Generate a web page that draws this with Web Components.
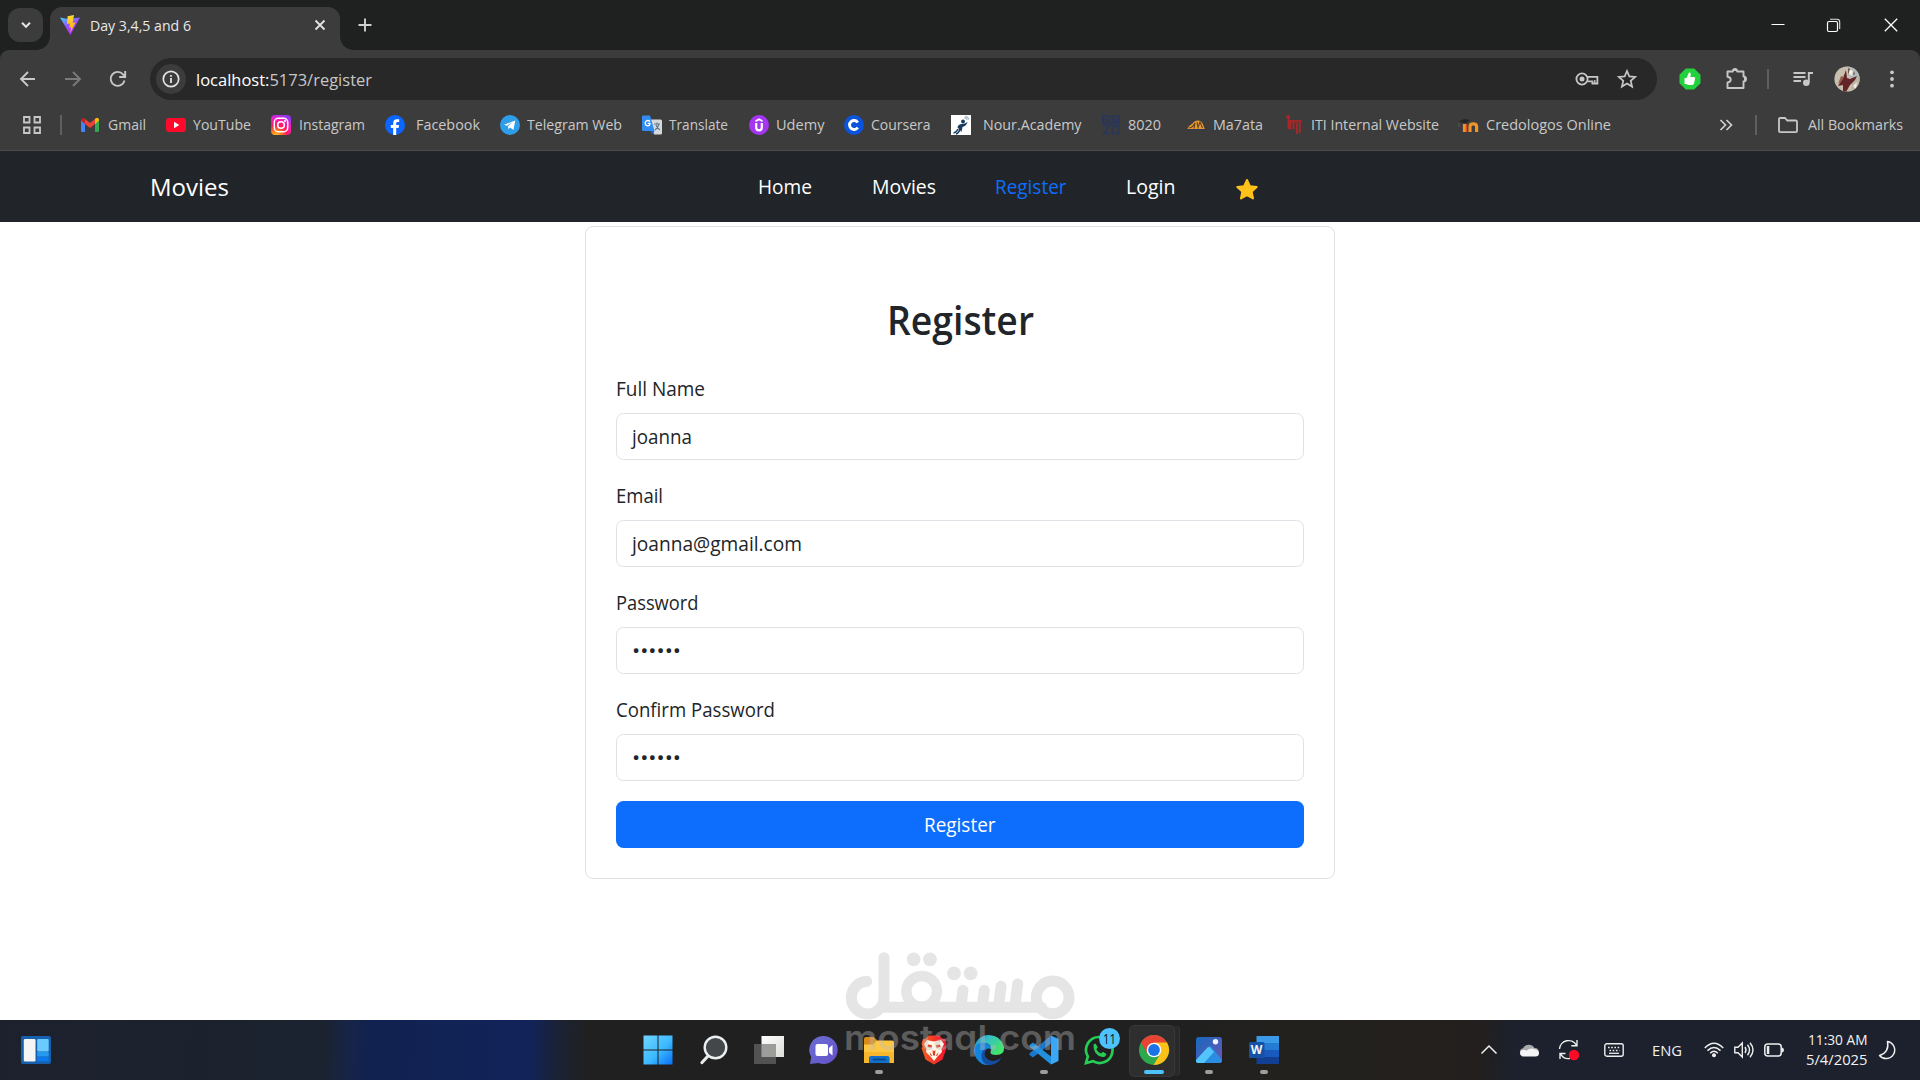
<!DOCTYPE html>
<html lang="en">
<head>
<meta charset="utf-8">
<title>Day 3,4,5 and 6</title>
<style>
html,body{margin:0;height:100%;overflow:hidden;background:#fff}
body{font-family:"Open Sans","Noto Sans",sans-serif}
</style>
</head>
<body>
<desktop-screen></desktop-screen>
<script>
const ICONS = {
  chevdown: [12,12,'<path d="M2 3.8l4 4 4-4" fill="none" stroke="#e3e3e3" stroke-width="2"/>'],
  vite: [20,20,'<defs><linearGradient id="a" x1="0" y1="0" x2=".6" y2="1"><stop offset="0" stop-color="#41d1ff"/><stop offset=".55" stop-color="#9a4bff"/><stop offset="1" stop-color="#bd34fe"/></linearGradient><linearGradient id="b" x1="0" y1="0" x2="0" y2="1"><stop offset="0" stop-color="#ffdd35"/><stop offset="1" stop-color="#ffa800"/></linearGradient></defs><path d="M0 2.5l8 1.4L20 2.5 10.300 20z" fill="url(#a)"/><path d="M14 0L7.600 1.300 7 9l3-.6-1 4.300 2-.6-.4 5.200 5-10-3 .6z" fill="url(#b)"/>'],
  close: [12,12,'<path d="M1.500 1.500l9 9m0-9l-9 9" stroke="#e3e3e3" stroke-width="1.800"/>'],
  plus: [14,14,'<path d="M7 .5v13M.5 7h13" stroke="#d0d0d0" stroke-width="1.900"/>'],
  wmin: [14,14,'<path d="M.5 6.500h13" stroke="#fff" stroke-width="1"/>'],
  wmax: [14,14,'<rect x=".5" y="3.500" width="10" height="10" rx="1.500" fill="none" stroke="#fff" stroke-width="1.200"/><path d="M3 1.200h7q2.700 0 2.700 2.700v7" fill="none" stroke="#ddd" stroke-width="1.100"/>'],
  wclose: [14,14,'<path d="M.8.8l12.400 12.400m0-12.400L.8 13.200" stroke="#fff" stroke-width="1.300"/>'],
  back: [20,20,'<path d="M17 10H3.500M10 3l-7 7 7 7" fill="none" stroke="#c7c7c7" stroke-width="1.900"/>'],
  fwd: [20,20,'<path d="M2 10h14.500M10 3l7 7-7 7" fill="none" stroke="#7a7a7a" stroke-width="1.900"/>'],
  reload: [20,20,'<path d="M16.500 11.500A7 7 0 1 1 15 5.300L17 7.600M17.200 2v6h-6" fill="none" stroke="#c7c7c7" stroke-width="1.900"/>'],
  info: [18,18,'<circle cx="9" cy="9" r="7.700" fill="none" stroke="#e3e3e3" stroke-width="1.700"/><path d="M9 8v5M9 5v1.800" stroke="#e3e3e3" stroke-width="1.800"/>'],
  key: [24,14,'<circle cx="7" cy="7" r="5.600" fill="none" stroke="#c7c7c7" stroke-width="1.800"/><circle cx="7" cy="7" r="2.500" fill="#c7c7c7"/><path d="M12 4.800h10.400v6.700h-5V9.300h-5" fill="none" stroke="#c7c7c7" stroke-width="1.800"/><path d="M19.800 8v3" stroke="#c7c7c7" stroke-width="1.400"/>'],
  star: [20,20,'<path d="M10 2l2.300 5.400 5.900.5-4.500 3.900 1.400 5.800-5.100-3.100-5.100 3.100 1.400-5.800L1.800 7.900l5.900-.5z" fill="none" stroke="#c7c7c7" stroke-width="1.700"/>'],
  thumb: [22,22,'<path d="M6.800.5h8.400l6.300 6.200v8.600l-6.300 6.200H6.800L.5 15.300V6.700z" fill="#22d13c"/><path d="M5.500 10h2L10 4.500Q12 4 11.800 6.500L11.300 9h4Q16.500 9.500 16 11l-1 4.600q-.4 1.400-2 1.400H9l-1.500-1h-2z" fill="#fff"/>'],
  puzzle: [24,24,'<path d="M3.500 4.500H8.800q.2-2.500 2.200-2.500t2.200 2.500h6.300v5q2.500.2 2.500 2.500t-2.500 2.500v6.500h-16V15.500q3.200-.3 3.200-2.800T3.500 9.800z" fill="none" stroke="#c7c7c7" stroke-width="1.900" stroke-linejoin="round"/><path d="M9 4q.2-2.500 2-2.500T13 4zM20 10q2.600.2 2.600 2T20 14z" fill="#c7c7c7"/>'],
  media: [24,20,'<path d="M2.500 4h12M2.500 8h12M2.500 12h7.500" stroke="#c7c7c7" stroke-width="1.800"/><circle cx="15.300" cy="13.700" r="3.300" fill="#c7c7c7"/><path d="M17.800 13.500V4H22" fill="none" stroke="#c7c7c7" stroke-width="1.900"/>'],
  avatar: [26,26,'<clipPath id="c"><circle cx="13" cy="13" r="12.600"/></clipPath><g clip-path="url(#c)"><path fill="#c9bfae" d="M0 0h26v26H0z"/><path d="M13 0h13v12l-9 3z" fill="#b4b9ba"/><path d="M18 14l8-3v15h-9z" fill="#bdb6a6"/><path d="M12 4l1 8 3 1 7-3-2 4-5 5-4 7H9l0-7-5 1 5-8z" fill="#642528"/><path d="M15 3l4 2-1 5-3-2zM19 20l4-4-1 7z" fill="#f1ede6"/><path d="M14 2l2 1-2 6zM20 5l1 3-2 1z" fill="#6d5550"/><path d="M7 10l3 1-3 5-3 2z" fill="#95604f"/></g>'],
  dots: [6,20,'<g fill="#c7c7c7"><circle cx="3" cy="3.300" r="1.900"/><circle cx="3" cy="10" r="1.900"/><circle cx="3" cy="16.700" r="1.900"/></g>'],
  apps: [20,20,'<g fill="none" stroke="#c7c7c7" stroke-width="1.800"><path d="M2 2h5.500v5.500H2zM12.500 2H18v5.500h-5.500zM2 12.500h5.500V18H2zM12.500 12.500H18V18h-5.500z"/></g>'],
  gmail: [20,20,'<path d="M1 5v10.500q0 1.500 1.500 1.500H5V8z" fill="#4285f4"/><path d="M19 5v10.500q0 1.500-1.500 1.500H15V8z" fill="#34a853"/><path d="M15 8l4-3q0-2-2-2.200L15 4z" fill="#fbbc04"/><path d="M5 4l5 4 5-4v5l-5 4-5-4z" fill="#ea4335"/><path d="M5 9V4L3.500 3Q1 2.800 1 5.500z" fill="#c5221f"/><path d="M15 9V4l1.500-1Q19 2.800 19 5.500z" fill="#fbbc04"/>'],
  youtube: [20,20,'<rect y="3" width="20" height="14" rx="3.300" fill="#ff0a2a"/><path d="M8 6.800v6.400l5.300-3.200z" fill="#fff"/>'],
  instagram: [20,20,'<defs><radialGradient id="d" cx=".25" cy="1.050" r="1.100"><stop offset="0" stop-color="#ffd02a"/><stop offset=".25" stop-color="#ff7a1a"/><stop offset=".5" stop-color="#ff1a60"/><stop offset=".8" stop-color="#f81cc4"/><stop offset="1" stop-color="#9236f0"/></radialGradient></defs><rect width="20" height="20" rx="4" fill="url(#d)"/><rect x="3.300" y="3.300" width="13.400" height="13.400" rx="4" fill="none" stroke="#fff" stroke-width="1.500"/><circle cx="10" cy="10" r="3.300" fill="none" stroke="#fff" stroke-width="1.600"/><circle cx="14" cy="6" r="1" fill="#fff"/>'],
  facebook: [20,20,'<circle cx="10" cy="10" r="10" fill="#0a66ff"/><path d="M8.200 20v-7H5.800v-3h2.400V8q0-3.800 3.600-3.800h2.400V7h-1.600Q11.200 7 11.200 8.300V10h2.900l-.5 3h-2.400v7z" fill="#fff"/>'],
  telegram: [20,20,'<circle cx="10" cy="10" r="10" fill="#2f9ee8"/><path d="M4 9.800L15.300 5.400 13.400 15l-3.300-2.400-1.700 1.600-.4-3 4.400-4-5.500 3.500z" fill="#fff"/>'],
  translate: [20,20,'<path d="M8 4.500h10.500q1.500 0 1.500 1.500v12q0 1.500-1.500 1.500H12z" fill="#d7dadd"/><path d="M12 9h6m-3-1.500V9m2 0q-1 4-4 6m1-5q1 3 4 5" fill="none" stroke="#62778c" stroke-width="1.100"/><path d="M0 1.500Q0 .5 1 .5h7L12.500 16H1.500Q0 16 0 14.500z" fill="#2f8df4"/><path d="M8.300 16h4.200l-2.800 3.500z" fill="#1b62c4"/><path d="M8 6.500Q6.500 5 4.600 5.800 3 6.800 3.200 8.700q.5 2.200 2.500 2.200Q8 10.700 8 8.400H5.700" fill="none" stroke="#fff" stroke-width="1.300"/>'],
  udemy: [20,20,'<circle cx="10" cy="10" r="10" fill="#a435f0"/><path d="M6.500 6.300L10 4.300l3.500 2" fill="none" stroke="#fff" stroke-width="1.800"/><path d="M7.200 8v4.500q0 2.800 2.800 2.800t2.800-2.800V8" fill="none" stroke="#fff" stroke-width="2.200"/>'],
  coursera: [20,20,'<circle cx="10" cy="10" r="10" fill="#0a53dc"/><path d="M13.800 7.500A4.500 4.500 0 1 0 13.800 12.500" fill="none" stroke="#fff" stroke-width="2.900"/>'],
  nour: [20,20,'<path d="M0 0h20v20H0z" fill="#fff"/><circle cx="12" cy="6.500" r="1.900" fill="#173b60"/><path d="M16.500 7q-1 4-5 5l-1 5q-2-3-4-4.500Q7 9 11 9q3 0 5.500-2z" fill="#173b60"/><path d="M9 14q-1 4-4 5m2-5q-2 4-4.500 4" fill="none" stroke="#173b60" stroke-width="1.400"/><path d="M14 1.500q3 0 4 3m-5-1.500q3-.5 3 2" fill="none" stroke="#a7b5c3" stroke-width="1.200"/>'],
  n8020: [20,20,'<g fill="none" stroke="#2c3657" stroke-width="1.900"><path d="M2 1h6v7H2zM2 3l6 4M11 1.500h7v7h-7zM12 3l5 5M2 10.500h6.500l-6 8H9M11.500 11h6v7.500h-6z"/></g><path d="M11 4h7v4h-7z" fill="#2c3657"/>'],
  ma7ata: [20,20,'<path d="M1 14.500Q2.500 10.500 6.500 8.500 8.500 5.500 12 5.500q3.500 0 5 4l2 5z" fill="#e9982f"/><path d="M3 13q4-.5 6-5l-1 5.500M11 7l1 5.500L14 7l2.500 6" fill="none" stroke="#5c4322" stroke-width="1.100"/><path d="M1 14.500h18" stroke="#2b3a55"/>'],
  iti: [20,20,'<path d="M1 2h4M3.500 0v14M5.500 5v9.500M8.500 6.500V14M12 8v11M14.800 6v12" fill="none" stroke="#a92628" stroke-width="1.900"/><path d="M5 6.200h11.500" stroke="#a92628" stroke-width="2.200"/>'],
  moodle: [22,20,'<path d="M0 7l6-3 6 1-4 3z" fill="#252525"/><path d="M1 7v5" stroke="#555"/><path d="M6.500 17V9M12 17v-5.500q0-2.700 3.300-2.700t3.300 2.700V17" fill="none" stroke="#f09329" stroke-width="3.200"/><path d="M8.500 17V9" stroke="#d64b2c" stroke-width="1.500"/>'],
  more: [14,12,'<path d="M1.500 1l5 5-5 5M7.500 1l5 5-5 5" fill="none" stroke="#d0d0d0" stroke-width="1.700"/>'],
  folder: [22,18,'<path d="M2 15V3.300Q2 2 3.300 2H8l2.300 2.500h8.400Q20 4.500 20 5.800V15q0 1.200-1.300 1.200H3.300Q2 16.200 2 15z" fill="none" stroke="#c7c7c7" stroke-width="1.800"/>'],
  favstar: [24,24,'<path d="M12 2l2.900 6.200 6.800.8-5 4.600 1.300 6.800L12 17.100 6 20.400l1.300-6.800-5-4.600 6.800-.8z" fill="#ffc11a" stroke="#ffc11a" stroke-width="2" stroke-linejoin="round"/>'],
  widgets: [30,28,'<rect width="30" height="28" rx="2" fill="#1760ad"/><rect x="2.800" y="3" width="11.700" height="22.500" rx="1.200" fill="#f5f5f5"/><rect x="16.200" y="3" width="11.500" height="12.500" rx="1" fill="#6acbff"/><path d="M16.200 16h11.500v4.500H16.200z" fill="#2699f1"/><path d="M16.200 21h11.500v4.500H16.200z" fill="#0d78ec"/>'],
  start: [30,30,'<defs><linearGradient id="e" x1="0" y1="0" x2="1" y2="1"><stop offset="0" stop-color="#70d5ff"/><stop offset=".55" stop-color="#3cbaff"/><stop offset="1" stop-color="#0a6ff5"/></linearGradient></defs><path d="M.5.500h14v14h-14zM15.500.500h14v14h-14zM.500 15.500h14v14h-14zM15.500 15.500h14v14h-14z" transform="translate(-1)" fill="url(#e)"/>'],
  search: [30,30,'<path d="M9.500 20.500l-6.500 7" stroke="#e8eaeb" stroke-width="3.200" stroke-linecap="round"/><circle cx="16.500" cy="12.500" r="10.800" fill="#44474a" stroke="#eceff0" stroke-width="2.400"/>'],
  taskview: [30,30,'<defs><linearGradient id="f" x1="0" y1="0" x2="1" y2="1"><stop offset="0" stop-color="#fff"/><stop offset="1" stop-color="#dcdcd8"/></linearGradient></defs><path d="M7.500 1h22.500v21H7.500z" fill="url(#f)"/><path d="M0 9h22v20H0z" fill="#555" opacity=".95"/><path d="M7.500 9H22v13H7.500z" fill="#9c9c9a"/>'],
  chat: [30,30,'<defs><linearGradient id="g" x1="0" y1="0" x2="1" y2="1"><stop offset="0" stop-color="#6c6fd2"/><stop offset="1" stop-color="#6350c9"/></linearGradient></defs><path d="M15 1a14 14 0 1 1-5.500 27L1 29l1.200-7A14 14 0 0 1 15 1z" fill="url(#g)"/><rect x="6.500" y="9" width="12.500" height="12" rx="2" fill="#fff"/><path d="M20 13l3.500-3v10.500L20 17.500z" fill="#fff"/>'],
  explorer: [30,28,'<path d="M0 3Q0 1 2 1h7.500L13 4v6H0z" fill="#d98a18"/><path d="M0 8.500h9l3.500-4H28q2 0 2 2V27H0z" fill="#ffc640"/><path d="M0 16h30v11H0z" fill="#f8b62d"/><path d="M5 27v-5q0-2 2-2h16.500q2 0 2 2v5z" fill="#1270c8"/><path d="M9.500 23.500h11.500" stroke="#084a91" stroke-width="1.800" stroke-linecap="round"/>'],
  brave: [26,30,'<defs><linearGradient id="h"><stop offset="0" stop-color="#f26122"/><stop offset="1" stop-color="#f5102c"/></linearGradient></defs><path d="M7.500.5h11l3 3.300 2.500.3 1.500 4.300-1 3.600 1 1-4 11.500L13 29.500l-8.500-5L.5 13l1-1-1-3.600L2 4.100l2.500-.3z" fill="url(#h)"/><path d="M6 5l7 1.500L20 5l3 4-2.500 5 .5 3-4.500 4.500L13 26l-3.500-4.500L5 17l.5-3L3 9z" fill="#fff7e5"/><path d="M7 9.500l4 .8-.5 2.500L6.500 12zM19 9.500l-4 .8.5 2.500 4-.8zM11.500 15l1.500 1.300 1.500-1.300-.5 5-1 1-1-1zM8.500 17l3 4-2-.5zM17.500 17l-3 4 2-.5z" fill="#df3927"/>'],
  edge: [30,30,'<defs><linearGradient id="i" x1="0" y1="0" x2="1" y2=".5"><stop offset="0" stop-color="#1b83cf"/><stop offset=".45" stop-color="#35bfc7"/><stop offset="1" stop-color="#43e46a"/></linearGradient></defs><path d="M15 0Q27 .5 30 12q.8 8-8 8-6 0-5.500-3Q19 10 12 8 4 7 0 14 2 .5 15 0z" fill="url(#i)"/><path d="M0 14Q4 6 12 8q5 1.500 5.500 6.500Q12 11 10 19q1 7 8 10-8 3-13.500-3T0 14z" fill="#1485df"/><path d="M12 13.500q-3.500 7 1.500 10.500 6 4.500 14-1.500-4 7.500-12.500 7.500Q7 29 7.500 20q.5-5 4.500-6.500z" fill="#164c9f"/>'],
  vscode: [30,30,'<path d="M22 .500L29.500 4v22L22 29.500z" fill="#3ba7f5"/><path d="M22 .500v8L4 22.500.500 20v-1.700z" fill="#1d75c6"/><path d="M22 29.500v-8L4 7.500.500 10v1.700z" fill="#238fdf"/>'],
  whatsapp: [30,30,'<path d="M15.500 2a13 13 0 1 1-6.500 24.200L2 28l1.800-6.500A13 13 0 0 1 15.500 2z" fill="none" stroke="#25cc55" stroke-width="2.700"/><path d="M9.500 9.500l2-1 2.300 3.800-1.500 2q1.500 3 4.800 4.200l1.800-1.800 3.500 2.200q-.5 3-3.800 3.200Q9 20 9.500 9.500z" fill="#25cc55"/>'],
  chrome: [30,30,'<circle cx="15" cy="15" r="15" fill="#2ca84f"/><path d="M2 7.500A15 15 0 0 1 28 7.500L15 8.500 8.500 18.800z" fill="#e84335"/><path d="M28 7.500A15 15 0 0 1 14.500 30L21.500 18.500 15 7.500z" fill="#fbc116"/><circle cx="15" cy="15" r="7.300" fill="#fff"/><circle cx="15" cy="15" r="5.900" fill="#1a73e8"/>'],
  photos: [26,26,'<defs><linearGradient id="j" x1="0" y1="0" x2="1" y2="1"><stop offset="0" stop-color="#1668bd"/><stop offset="1" stop-color="#6c58b7"/></linearGradient></defs><rect width="26" height="26" rx="2.500" fill="url(#j)"/><path d="M0 24L13 9.500q1-1 2 0l11 13.500q0 3-3 3H2q-2 0-2-2z" fill="#2a8de2"/><path d="M0 23l11.500-12.500q1.300-1 2.500 0l4 4.500-10 11H2q-2 0-2-3z" fill="#52c6fb"/><circle cx="19.500" cy="4.800" r="2.700" fill="#f3f2ff"/>'],
  word: [30,28,'<path d="M7.500 0H30v7H7.500z" fill="#3a9ae8"/><path d="M7.500 7H30v7H7.500z" fill="#247bd4"/><path d="M7.500 14H30v7H7.500z" fill="#185abd"/><path d="M7.500 21H30v7H7.500z" fill="#123f91"/><rect x="0" y="6" width="15.500" height="16" rx="1.500" fill="#1552a7"/>'],
  tup: [18,12,'<path d="M1.500 9.500L9 2l7.500 7.500" fill="none" stroke="#eee" stroke-width="1.500"/>'],
  cloud: [20,14,'<path d="M4 13a4 4 0 0 1 0-7.800A6.500 6.500 0 0 1 15.500 5 4 4 0 0 1 16 13z" fill="#a8aaac"/><path d="M3.500 13.500a3.500 3.500 0 0 1 .5-6.800q2.500 0 3.500 1 4-3.500 8.200-1.500Q20 7 20 10.200q-.2 3.300-3.500 3.300z" fill="#f4f4f4"/>'],
  sync: [22,22,'<path d="M1.500 10A9 9 0 0 1 18.500 6.500M19 1v5.700h-5.700M12 19.500q-7 1-9.500-5M2 20v-5.500h5.500" fill="none" stroke="#eee" stroke-width="1.400"/><circle cx="16" cy="16" r="5.200" fill="#fb0b25"/>'],
  keyboard: [20,14,'<rect x=".8" y=".8" width="18.400" height="12.400" rx="2" fill="none" stroke="#eee" stroke-width="1.400"/><path d="M4 4.500h12.500M5.500 7.500h10" stroke="#eee" stroke-width="1.600" stroke-dasharray="1.600 1.600"/><path d="M5 10.300h10" stroke="#eee" stroke-width="1.300"/>'],
  wifi: [20,16,'<g fill="none" stroke="#eee" stroke-width="1.500"><path d="M.8 6Q10-3.500 19.200 6M3.500 8.600q6.500-6.300 13 0M6.200 11.200q3.800-3.800 7.600 0"/></g><circle cx="10" cy="13.200" r="2" fill="#eee"/>'],
  speaker: [20,18,'<g fill="none" stroke="#eee" stroke-width="1.400"><path d="M.8 6.200H4L8.300 2v14L4 11.800H.8zM11 6q2 3 0 6M13.500 3.800q4 5.200 0 10.400M16 1.800q6 7.200 0 14.400"/></g>'],
  battery: [20,14,'<rect x=".8" y="1" width="16.400" height="12" rx="3" fill="none" stroke="#eee" stroke-width="1.500"/><path d="M2.800 3h2.500v8H2.800z" fill="#eee"/><path d="M18 4.500q2 .5 2 2.500t-2 2.500z" fill="#eee"/>'],
  moon: [18,20,'<path d="M9.500 1.500A8.600 8.600 0 1 1 1.500 15.500Q11.500 12.500 9.500 1.500z" fill="none" stroke="#eee" stroke-width="1.500" stroke-linejoin="round"/>']
};

const def = (name, css, html, setup) => {
  const t = document.createElement('template');
  t.innerHTML = `<style>:host{display:block;box-sizing:border-box}*{box-sizing:border-box}${css}</style>${html}`;
  customElements.define(name, class extends HTMLElement {
    connectedCallback() {
      if (this.shadowRoot) return;
      this.attachShadow({mode:'open'}).appendChild(t.content.cloneNode(true));
      if (setup) setup(this, this.shadowRoot);
    }
  });
};

/* Icon: draws one entry of the icon table. */
def('ui-icon', ':host{display:block;flex:none}svg{display:block;overflow:visible}', '<div></div>', (h, r) => {
  const [w, ht, body] = ICONS[h.getAttribute('name')];
  r.querySelector('div').innerHTML = `<svg width="${w}" height="${ht}" viewBox="0 0 ${w} ${ht}">${body}</svg>`;
});

/* One line of text condensed or widened to the width "w". */
def('fit-text', ':host{display:block;flex:none;white-space:nowrap}span{display:inline-block;transform-origin:0 50%;vertical-align:top}', '<span><slot></slot></span>', (h, r) => {
  const w = +h.getAttribute('w'), s = r.querySelector('span');
  h.style.width = w + 'px';
  const nat = s.getBoundingClientRect().width;
  if (nat) s.style.transform = `scaleX(${w / nat})`;
});

def('tab-strip', `
:host{display:flex;height:50px;background:#1f2120;align-items:flex-start;padding:0 22px 0 8px}
.find{width:35px;height:34px;margin-top:8px;border-radius:12px;background:#3c3c3c;display:flex;align-items:center;justify-content:center}
.tab{position:relative;width:290px;height:43px;margin:7px 0 0 7px;background:#3c3c3c;border-radius:12px 12px 0 0;display:flex;align-items:center;padding:0 14px 7px 10px}
.tab::before,.tab::after{content:"";position:absolute;bottom:0;width:13px;height:13px}
.tab::before{left:-13px;background:radial-gradient(circle at 0 0,#0000 12.5px,#3c3c3c 13px)}
.tab::after{right:-13px;background:radial-gradient(circle at 100% 0,#0000 12.5px,#3c3c3c 13px)}
.tab fit-text{color:#e8e8e8;font-size:14.600px;line-height:20px;margin:0 auto 0 10px}
.row{display:flex;align-items:center;height:50px}
`, `
<div class="find"><ui-icon name="chevdown"></ui-icon></div>
<div class="tab"><ui-icon name="vite"></ui-icon><fit-text w="101">Day 3,4,5 and 6</fit-text><ui-icon name="close"></ui-icon></div>
<div class="row" style="margin-left:18px"><ui-icon name="plus"></ui-icon></div>
<div class="row" style="margin-left:auto"><ui-icon name="wmin"></ui-icon><ui-icon name="wmax" style="margin:0 43px 0 42px"></ui-icon><ui-icon name="wclose"></ui-icon></div>`);

def('tool-bar', `
:host{background:#1f2120}
.bar{display:flex;align-items:center;height:58px;background:#3c3c3c;border-radius:9px 9px 0 0;padding:0 24px 0 18px}
.omni{display:flex;align-items:center;width:1507px;flex:none;height:42px;border-radius:21px;background:#282828;margin-left:22.500px;padding:0 20px 0 6px}
.site{width:30px;height:30px;border-radius:15px;background:#3c3c3c;display:flex;align-items:center;justify-content:center}
.url{display:flex;margin:1px auto 0 10px;font-size:17.200px;line-height:24px;color:#c7c7c7}
.url b{font-weight:400;color:#fff}
.sep{width:2px;height:20px;background:#5f5f5f}
`, `<div class="bar">
<ui-icon name="back"></ui-icon><ui-icon name="fwd" style="margin-left:24.500px"></ui-icon><ui-icon name="reload" style="margin-left:25px"></ui-icon>
<div class="omni"><div class="site"><ui-icon name="info"></ui-icon></div><div class="url"><fit-text w="176"><b>localhost:</b>5173/register</fit-text></div><ui-icon name="key"></ui-icon><ui-icon name="star" style="margin-left:18px"></ui-icon></div>
<ui-icon name="thumb" style="margin-left:22px"></ui-icon><ui-icon name="puzzle" style="margin-left:23px"></ui-icon><div class="sep" style="margin-left:18.500px"></div><ui-icon name="media" style="margin-left:22px"></ui-icon><ui-icon name="avatar" style="margin-left:19.500px"></ui-icon><ui-icon name="dots" style="margin-left:29px"></ui-icon></div>`);

/* Bookmark entries: icon name, icon start, label start, label width, label. */
customElements.define('book-marks', class extends HTMLElement {
  connectedCallback() {
    const items = [
      ['gmail',80,107.5,38,'Gmail'],['youtube',166,193,58,'YouTube'],['instagram',271,298.5,66,'Instagram'],
      ['facebook',385,416,64,'Facebook'],['telegram',500,527,95,'Telegram Web'],['translate',642,669,59,'Translate'],
      ['udemy',749,775.5,48.5,'Udemy'],['coursera',844,870.5,59.5,'Coursera'],['nour',951,982.5,98.5,'Nour.Academy'],
      ['n8020',1101,1128,33,'8020'],['ma7ata',1186,1213,50,'Ma7ata'],['iti',1285,1311,128,'ITI Internal Website'],
      ['moodle',1457.5,1485.5,125,'Credologos Online']];
    const r = this.attachShadow({mode:'open'});
    r.innerHTML = `<style>
:host{display:flex;box-sizing:border-box;align-items:center;height:43px;background:#3c3c3c;border-bottom:1px solid #4a4a4a;padding:0 17.500px 8px 22px;font-size:14.600px;line-height:20px;color:#c9c9c9}
.item{display:flex;align-items:center;flex:none}
fit-text{margin-bottom:2px}
.sep{width:2px;height:20px;background:#5f5f5f;flex:none}
</style><ui-icon name="apps"></ui-icon><div class="sep" style="margin:0 18px 0 18px"></div>` +
    items.map(([n,ix,tx,w,l],i) => {
      const end = i + 1 < items.length ? items[i+1][1] : tx + w;
      return `<div class="item" style="margin-right:${end-tx-w}px"><ui-icon name="${n}"></ui-icon><fit-text w="${w}" style="margin-left:${tx-ix-ICONS[n][0]}px">${l}</fit-text></div>`;
    }).join('') +
    `<ui-icon name="more" style="margin-left:auto"></ui-icon><div class="sep" style="margin:0 20px 0 22px"></div><ui-icon name="folder"></ui-icon><fit-text w="95" style="margin-left:8.500px">All Bookmarks</fit-text>`;
  }
});

def('site-nav', `
:host{display:flex;align-items:center;height:71px;background:#212529;padding:0 0 0 150px;color:#fff;font-size:19.600px;line-height:30px}
.brand{font-size:24.500px;margin:1px 529px 0 0}
`, `<fit-text class="brand" w="79">Movies</fit-text>
<fit-text w="54">Home</fit-text><fit-text w="64" style="margin-left:59.500px">Movies</fit-text><fit-text w="71.500" style="margin-left:59.500px;color:#0d6efd">Register</fit-text><fit-text w="49.500" style="margin-left:59.500px">Login</fit-text><ui-icon name="favstar" style="margin:7px 0 0 59.500px"></ui-icon>`);

def('form-field', `
:host{margin-bottom:20px}
label{display:block;line-height:30px;padding-top:1px;height:30px;margin-bottom:10px}
.box{display:flex;align-items:center;height:47px;border:1px solid #dee2e6;border-radius:7.500px;padding:0 15px}
`, `<label><slot name="label"></slot></label><div class="box"><slot></slot></div>`);

def('register-card', `
:host{width:750px;margin:4px auto 0;border:1px solid #dee2e6;border-radius:8px;padding:69px 30px 30px;color:#212529;font-size:19.600px;height:653px}
h2{margin:0 0 29px;font-size:39px;font-weight:600;line-height:48px;display:flex;justify-content:center}
.btn{display:flex;align-items:center;justify-content:center;height:47px;border-radius:7.500px;background:#0d6efd;color:#fff;line-height:30px}
.dots{font-size:20px;line-height:30px;padding-top:1px}
`, `<h2><fit-text w="147">Register</fit-text></h2>
<form-field><fit-text slot="label" w="89">Full Name</fit-text><fit-text w="60">joanna</fit-text></form-field>
<form-field><fit-text slot="label" w="47">Email</fit-text><fit-text w="170">joanna@gmail.com</fit-text></form-field>
<form-field><fit-text slot="label" w="82.500">Password</fit-text><fit-text w="49" class="dots">••••••</fit-text></form-field>
<form-field><fit-text slot="label" w="159">Confirm Password</fit-text><fit-text w="49" class="dots">••••••</fit-text></form-field>
<div class="btn"><fit-text w="71.500">Register</fit-text></div>`);

/* Taskbar button: 55px cell with an optional running indicator under the icon. */
def('task-app', `
:host{display:flex;position:relative;width:55px;height:60px;align-items:center;justify-content:center;flex:none}
:host([run])::after{content:"";position:absolute;left:50%;bottom:6px;width:8px;height:4px;margin-left:-4px;border-radius:2px;background:#9d9d9d}
:host([active])::before{content:"";position:absolute;left:3px;top:5px;width:44px;height:50px;border-radius:5px;background:#2e2e2e;border:1px solid #383838;box-shadow:5px 0 0 -1px #292929,6px 0 0 -1px #363636}
:host([active])::after{width:20px;margin-left:-10px;background:#4cc2ff}
.ic{position:relative}
::slotted(*){position:absolute}
`, `<div class="ic"></div><slot></slot>`, (h, r) => {
  const n = document.createElement('ui-icon');
  n.setAttribute('name', h.getAttribute('icon'));
  r.querySelector('.ic').append(n);
});

def('task-bar', `
:host{display:flex;align-items:center;height:60px;color:#f2f2f2;background:linear-gradient(92deg,#1c212d 0,#1b222e 200px,#1b2330 325px,#17244a 352px,#112250 372px,#112252 400px,#12235a 530px,#1a2235 558px,#202020 588px,#202020 1180px,#23211d 1330px,#221f1e 1480px,#1c212d 1515px,#1c212d 100%);padding:0 24px 0 21px}
.apps{display:flex;margin-left:580px}
.badge{left:28px;top:8px;width:21px;height:21px;border-radius:11px;background:#4cc2ff;color:#111;display:flex;align-items:center;justify-content:center;font-size:14.500px;line-height:20px}
.w{left:13px;top:21px;width:15px;font:700 12px/18px "Open Sans",sans-serif;text-align:center}
.tray{display:flex;align-items:center;margin-left:auto;font-size:14.600px;line-height:20px}
.clock{display:flex;flex-direction:column;align-items:flex-end;margin-bottom:2px}
`, `<ui-icon name="widgets"></ui-icon>
<div class="apps"><task-app icon="start"></task-app><task-app icon="search"></task-app><task-app icon="taskview"></task-app><task-app icon="chat"></task-app><task-app icon="explorer" run></task-app><task-app icon="brave"></task-app><task-app icon="edge"></task-app><task-app icon="vscode" run></task-app><task-app icon="whatsapp"><div class="badge"><fit-text w="13">11</fit-text></div></task-app><task-app icon="chrome" run active></task-app><task-app icon="photos" run></task-app><task-app icon="word" run><div class="w">W</div></task-app></div>
<div class="tray"><ui-icon name="tup"></ui-icon><ui-icon name="cloud" style="margin-left:20.500px"></ui-icon><ui-icon name="sync" style="margin-left:19.500px"></ui-icon><ui-icon name="keyboard" style="margin-left:24px"></ui-icon><fit-text w="30" style="margin-left:28px">ENG</fit-text><ui-icon name="wifi" style="margin-left:22px"></ui-icon><ui-icon name="speaker" style="margin-left:10px"></ui-icon><ui-icon name="battery" style="margin-left:10px"></ui-icon><div class="clock" style="margin-left:21.500px"><fit-text w="59.500">11:30 AM</fit-text><fit-text w="61.500">5/4/2025</fit-text></div><ui-icon name="moon" style="margin-left:11px"></ui-icon></div>`);

/* Translucent brand mark laid over the page and the taskbar. */
def('water-mark', `
:host{position:absolute;left:835px;top:935px;width:250px;height:130px;opacity:.38;pointer-events:none}
svg{display:block}
fit-text{position:absolute;left:8.500px;top:83px;font:600 33.500px/40px Inter,sans-serif;color:#bdbdbd}
`, `<svg width="250" height="130" viewBox="0 0 750 390"><g fill="none" stroke="#bdbdbd" stroke-width="33" stroke-linecap="round"><path d="M95 139A49 49 0 1 0 147 188V68M147 217H620M384 166l-6 45M448 166l-6 45M498 154l-7 57M548 147l-8 64"/><circle cx="653" cy="187" r="49"/><circle cx="260" cy="169" r="46" stroke-width="31"/></g><g fill="#bdbdbd"><circle cx="236" cy="73" r="20.500"/><circle cx="285" cy="73" r="20.500"/><circle cx="357" cy="115" r="20.500"/><circle cx="407" cy="115" r="20.500"/></g></svg><fit-text w="232">mostaql.com</fit-text>`);

def('desktop-screen', `
:host{display:flex;flex-direction:column;position:relative;width:1920px;height:1080px;overflow:hidden;background:#fff;font-family:"Open Sans","Noto Sans",sans-serif}
main{flex:1}
`, `<tab-strip></tab-strip><tool-bar></tool-bar><book-marks></book-marks><site-nav></site-nav><main><register-card></register-card></main><task-bar></task-bar><water-mark></water-mark>`);
</script>
</body>
</html>
